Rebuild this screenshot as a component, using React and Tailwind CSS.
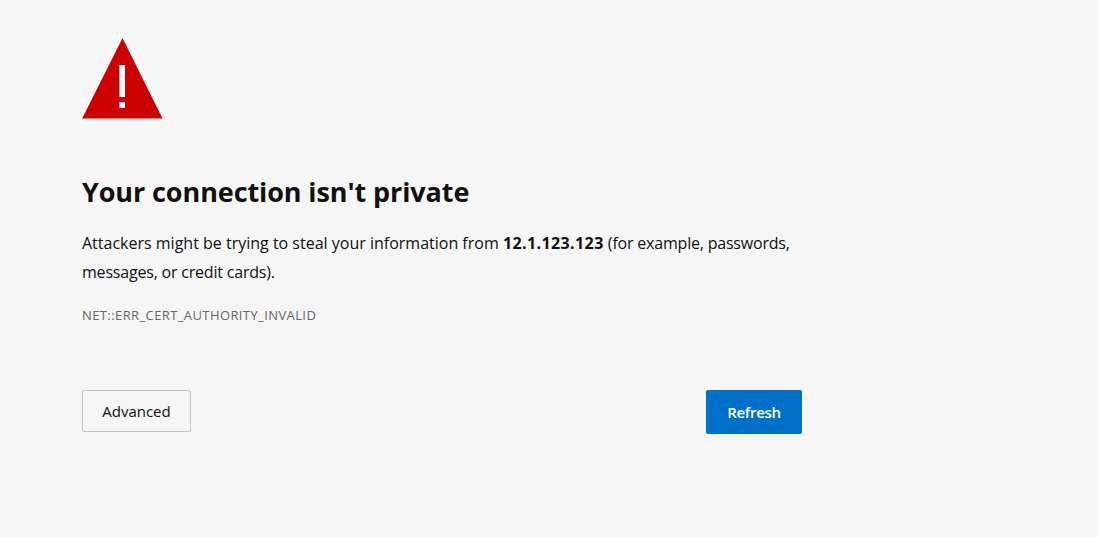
export default function App() {
  return (
    <div className="min-h-[537px] bg-[#f6f6f6] pl-[82px] pt-[38px] font-['Open_Sans','Noto_Sans',sans-serif] text-[#111111]">
      <div className="w-[720px]">
        <svg width="81" height="81" viewBox="0 0 81 81" className="block">
          <path d="M40.5 0 L80.5 80.5 L0.2 80.5 Z" fill="#cd0000" />
          <rect x="37.4" y="27" width="5.6" height="32" fill="#ffffff" />
          <rect x="37.4" y="64" width="5.6" height="6" fill="#ffffff" />
        </svg>

        <h1 className="mt-[55px] text-[27px] font-bold leading-[36px] tracking-[-0.1px]">Your connection isn't private</h1>

        <p className="mt-[19px] text-[16px] leading-[29px]">
          Attackers might be trying to steal your information from <b className="tracking-[0.4px]">12.1.123.123</b> <span className="tracking-[-0.2px]">(for example, passwords, messages, or credit cards).</span>
        </p>

        <div className="mt-[20px] text-[13px] leading-[16px] tracking-[0.4px] text-[#666666]">NET::ERR_CERT_AUTHORITY_INVALID</div>

        <div className="mt-[67px] flex items-start justify-between">
          <button className="h-[42px] w-[109px] rounded-[2px] border border-[#c4c4c4] bg-[#f6f6f6] text-[15px]">Advanced</button>
          <button className="h-[44px] w-[96px] rounded-[2px] bg-[#0070c9] text-[15px] font-semibold tracking-[-0.3px] text-white">Refresh</button>
        </div>
      </div>
    </div>
  );
}
